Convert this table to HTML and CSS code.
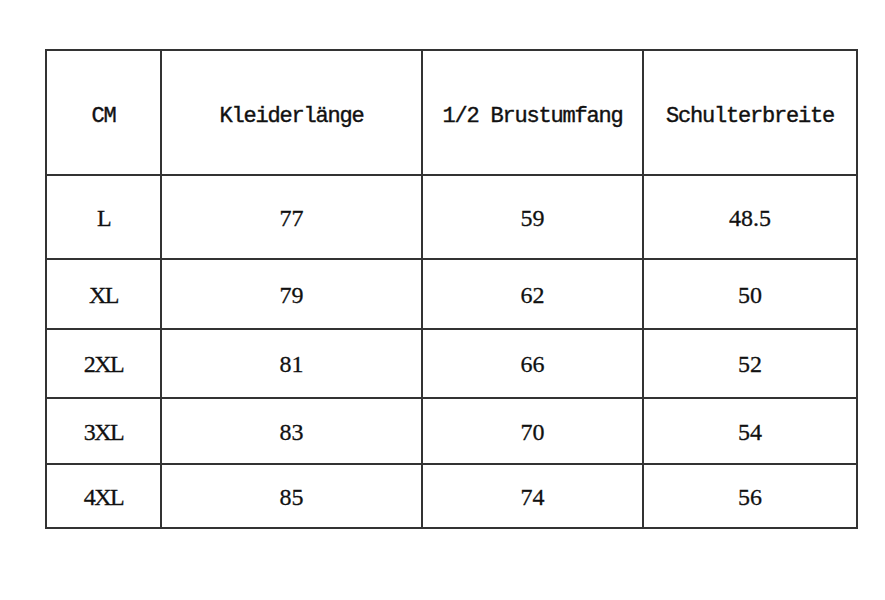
FILE: index.html
```html
<!DOCTYPE html>
<html lang="de">
<head>
<meta charset="utf-8">
<title>Größentabelle</title>
<link rel="stylesheet" href="styles.css">
</head>
<body>
<div class="page">
<table class="size-table">
  <colgroup>
    <col class="c1"><col class="c2"><col class="c3"><col class="c4">
  </colgroup>
  <thead>
    <tr class="r-head">
      <th>CM</th><th>Kleiderlänge</th><th>1/2 Brustumfang</th><th>Schulterbreite</th>
    </tr>
  </thead>
  <tbody>
    <tr class="r1"><td class="size">L</td><td>77</td><td>59</td><td>48.5</td></tr>
    <tr class="r2"><td class="size">XL</td><td>79</td><td>62</td><td>50</td></tr>
    <tr class="r3"><td class="size">2XL</td><td>81</td><td>66</td><td>52</td></tr>
    <tr class="r4"><td class="size">3XL</td><td>83</td><td>70</td><td>54</td></tr>
    <tr class="r5"><td class="size">4XL</td><td>85</td><td>74</td><td>56</td></tr>
  </tbody>
</table>
</div>
</body>
</html>
```

FILE: styles.css
```css
html, body {
  margin: 0;
  padding: 0;
  background: #ffffff;
}

.page {
  padding: 49px 0 0 45px;
}

.size-table {
  border-collapse: collapse;
  table-layout: fixed;
  width: 811px;
  color: #111;
}

.c1 { width: 115px; }
.c2 { width: 261px; }
.c3 { width: 221px; }
.c4 { width: 214px; }

.size-table th,
.size-table td {
  border: 2px solid #333;
  padding: 0;
  text-align: center;
  vertical-align: middle;
}

.size-table th {
  font-family: "Liberation Mono", monospace;
  font-weight: normal;
  font-size: 22px;
  letter-spacing: -1.2px;
  padding-top: 7px;
  -webkit-text-stroke: 0.4px #111;
}

.size-table td {
  font-family: "Liberation Serif", serif;
  font-size: 24px;
  padding-top: 2px;
  -webkit-text-stroke: 0.3px #111;
}

.size-table td.size {
  letter-spacing: -1.5px;
}

.r-head { height: 125px; }
.r1 { height: 84px; }
.r2 { height: 70px; }
.r3 { height: 69px; }
.r4 { height: 66px; }
.r5 { height: 64px; }
```
